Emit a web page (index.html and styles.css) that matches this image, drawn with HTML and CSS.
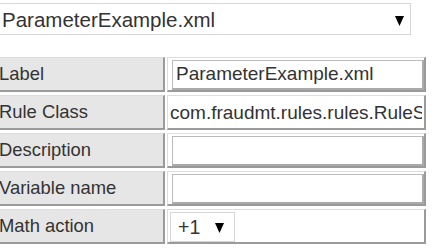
FILE: index.html
```html
<!DOCTYPE html>
<html>
<head>
  <title>Rule Parameters</title>
  <link rel="stylesheet" href="styles.css">
</head>
<body>
  <div class="page">
    <select class="file-select" id="file">
      <option>ParameterExample.xml</option>
    </select>

    <table class="params">
      <tr>
        <td class="name">Label</td>
        <td class="value"><input type="text" value="ParameterExample.xml"></td>
      </tr>
      <tr>
        <td class="name">Rule Class</td>
        <td class="value"><input type="text" class="plain" value="com.fraudmt.rules.rules.RuleSet" readonly></td>
      </tr>
      <tr>
        <td class="name">Description</td>
        <td class="value"><input type="text"></td>
      </tr>
      <tr>
        <td class="name">Variable name</td>
        <td class="value"><input type="text"></td>
      </tr>
      <tr>
        <td class="name">Math action</td>
        <td class="value">
          <select class="small-select">
            <option>+1</option>
            <option>-1</option>
          </select>
        </td>
      </tr>
    </table>
  </div>
</body>
</html>
```

FILE: styles.css
```css
/* page styling */
body {
  margin: 0;
  font-family: "Liberation Sans", Arial, sans-serif;
  background-color: #fff;
  color: #333;
}

.page {
  margin-left: -3px;
  padding-top: 3px;
}

select {
  -webkit-appearance: none;
  appearance: none;
  font-family: "Liberation Sans", Arial, sans-serif;
  color: #333;
  background-color: #fff;
  border: 1px solid #d6d6d6;
  border-radius: 0;
  outline: none;
  background-repeat: no-repeat;
  background-image: url("data:image/svg+xml;utf8,<svg xmlns='http://www.w3.org/2000/svg' width='9' height='10'><path d='M0 0H9L4.5 10Z' fill='black'/></svg>");
}

.file-select {
  width: 414px;
  height: 32px;
  padding: 0 30px 0 4px;
  font-size: 20.5px;
  background-position: 397px 12px;
}

.params {
  margin-top: 19px;
  border-spacing: 2px 3px;
  margin-left: -1px;
}

.params td {
  height: 32px;
  padding: 0;
  border-top: 1px solid #ddd;
  border-left: 1px solid #ddd;
  border-right: 2px solid #9a9a9a;
  border-bottom: 2px solid #9a9a9a;
}

.name {
  width: 164px;
  background-color: #e6e6e6;
  font-size: 18.4px;
}

.value {
  width: 256px;
  background-color: #fff;
  overflow: hidden;
}

input[type="text"] {
  box-sizing: border-box;
  width: 252px;
  height: 30px;
  margin: 1px 0 0 4px;
  padding: 0 3px;
  font-family: "Liberation Sans", Arial, sans-serif;
  font-size: 19px;
  color: #333;
  border-top: 1px solid #bbb;
  border-left: 1px solid #bbb;
  border-right: 2px solid #aaa;
  border-bottom: 2px solid #aaa;
  outline: none;
}

input.plain {
  border: none;
  margin-left: 0;
  width: 256px;
  padding: 0 2px;
}

.small-select {
  width: 65px;
  height: 30px;
  margin: 1px 0 0 2px;
  padding: 0 20px 0 7px;
  font-size: 19.5px;
  background-position: 44px 10px;
}
```
